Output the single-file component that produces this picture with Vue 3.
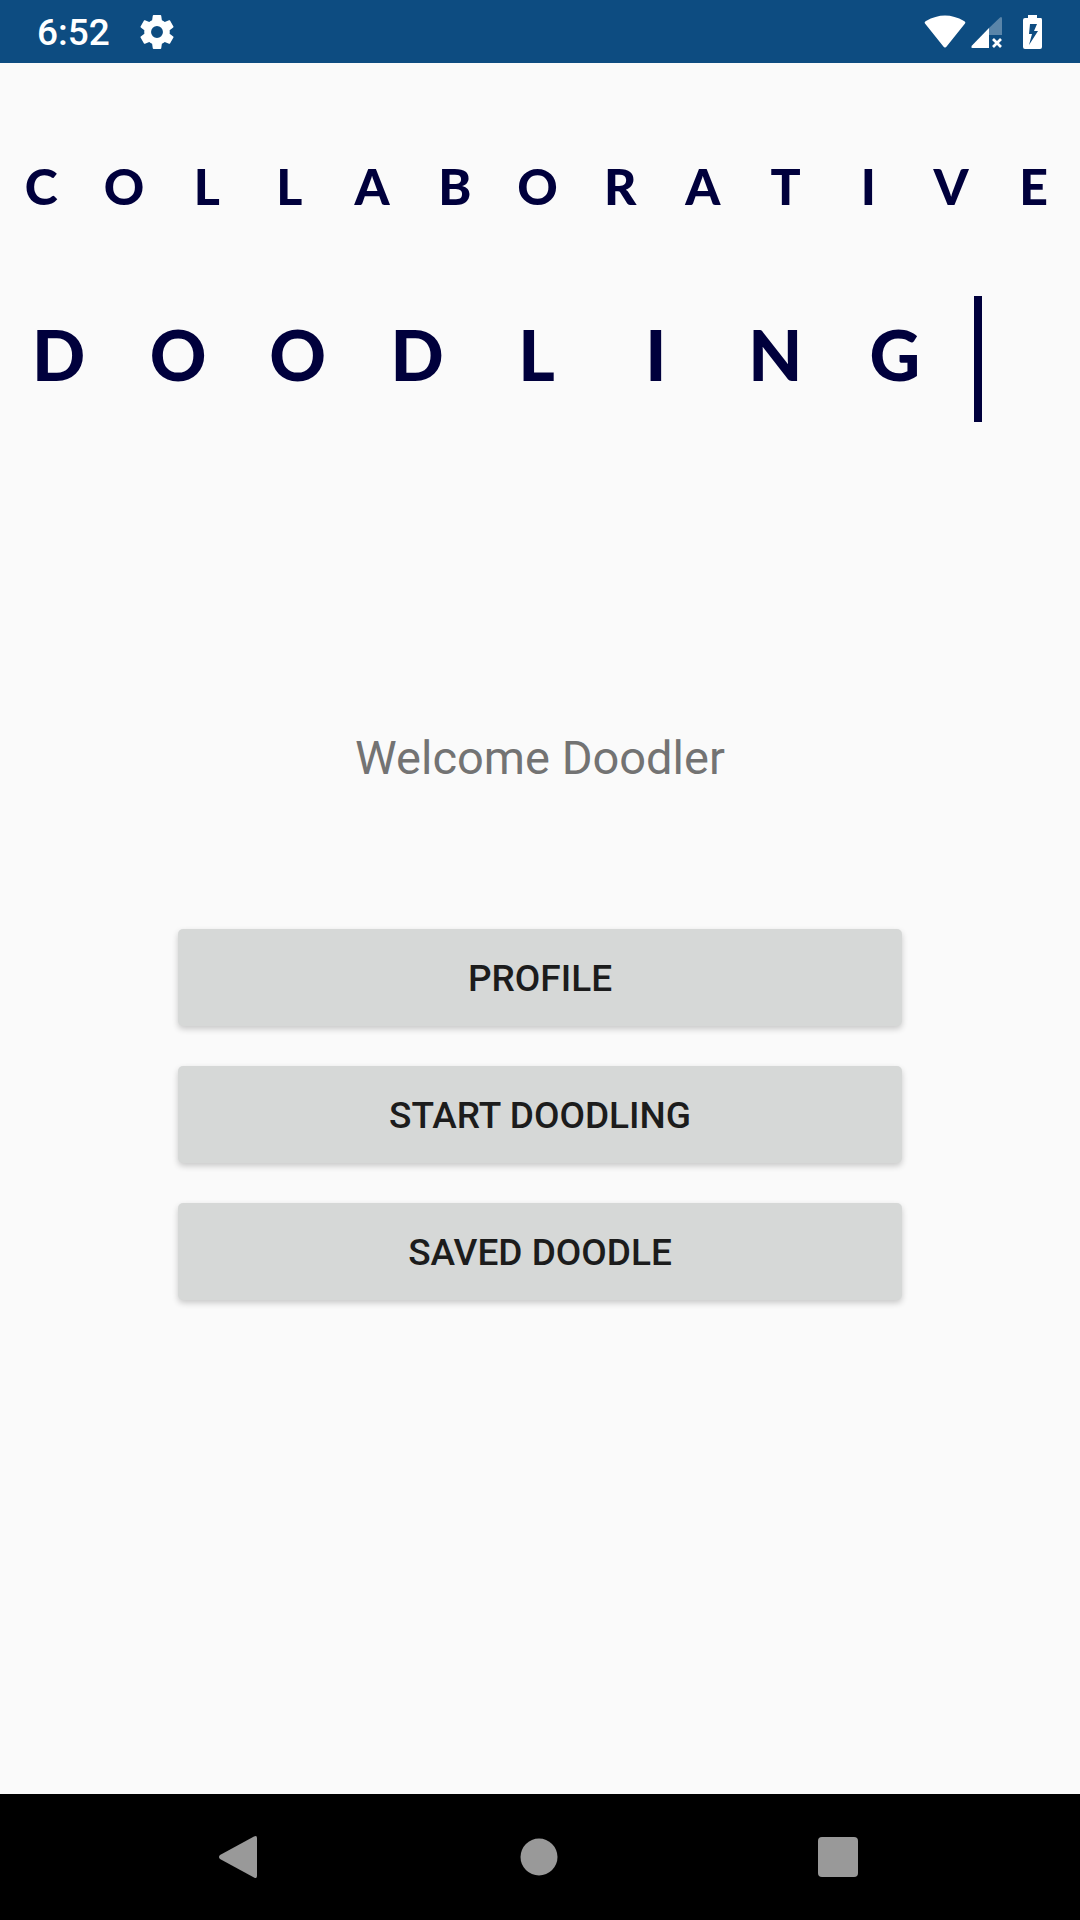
<script setup>
const topWord = [...'COLLABORATIVE']
const bottomWord = [...'DOODLING']
const actions = ['Profile', 'Start doodling', 'Saved doodle']
</script>

<template>
  <div class="screen">
    <header class="status">
      <time class="clock">6:52</time>
      <svg class="gear" viewBox="2 2 20 20" aria-hidden="true">
        <path fill="#fff" d="M19.43 12.98c.04-.32.07-.64.07-.98s-.03-.66-.07-.98l2.110-1.650c.19-.15.24-.42.12-.64l-2-3.460c-.12-.22-.39-.3-.61-.22l-2.490 1c-.52-.4-1.080-.73-1.690-.98l-.38-2.650A.49.49 0 0 0 14 2h-4c-.25 0-.46.18-.49.42l-.38 2.650c-.61.25-1.170.59-1.690.98l-2.490-1c-.23-.09-.49 0-.61.22l-2 3.460c-.13.22-.07.49.12.64l2.110 1.650c-.04.32-.07.65-.07.98s.03.66.07.98l-2.110 1.650c-.19.15-.24.42-.12.64l2 3.460c.12.22.39.3.61.22l2.490-1c.52.4 1.080.73 1.690.98l.38 2.650c.03.24.24.42.49.42h4c.25 0 .46-.18.49-.42l.38-2.650c.61-.25 1.170-.59 1.690-.98l2.490 1c.23.09.49 0 .61-.22l2-3.460c.12-.22.07-.49-.12-.64l-2.110-1.650zM12 15.500a3.500 3.500 0 1 1 0-7 3.500 3.500 0 0 1 0 7z" />
      </svg>
      <div class="signals">
        <svg width="42" height="34" viewBox="0 0 42 34" aria-hidden="true">
          <path fill="#fff" d="M1 8.500Q0 7 2 6Q21-5 40 6Q42 7 41 8.500L23 31Q21 34 19 31Z" />
        </svg>
        <svg class="cell" width="32" height="34" viewBox="0 0 32 34" aria-hidden="true">
          <path fill="#fff" d="M18 13V33H1.500Q-.5 33 1 30.500Z" />
          <path fill="#fff" fill-opacity=".32" d="M18 13L29 2.500Q31 1 31 4V20H18Z" />
          <path stroke="#fff" stroke-width="2.700" d="M22 24l8 8M30 24l-8 8" />
        </svg>
        <svg width="20" height="34" viewBox="0 0 20 34" aria-hidden="true">
          <path fill="#fff" fill-rule="evenodd" d="M5 0H14V3H18Q19 3 19 5V32Q19 34 17 34H2Q0 34 0 32V5Q0 3 2 3H5ZM7 9L6 19H9L6 30L15 16H11L14 9Z" />
        </svg>
      </div>
    </header>

    <main class="content">
      <h1 class="logo" aria-label="Collaborative Doodling">
        <span class="word small" aria-hidden="true">
          <span v-for="(letter, i) in topWord" :key="i">{{ letter }}</span>
        </span>
        <span class="word large" aria-hidden="true">
          <span v-for="(letter, i) in bottomWord" :key="i" class="letter">{{ letter }}</span>
          <span class="caret-cell"><i class="caret"></i></span>
        </span>
      </h1>
      <p class="welcome">Welcome Doodler</p>
      <div class="actions">
        <button v-for="action in actions" :key="action" type="button">{{ action }}</button>
      </div>
    </main>

    <nav class="navbar" aria-label="System navigation">
      <button type="button" aria-label="Back">
        <svg width="44" height="44" viewBox="0 0 44 44"><path fill="#999" d="M3 20L37 1.500Q40 0 40 3V41Q40 44 37 42.500L3 24Q1 22 3 20Z" /></svg>
      </button>
      <button type="button" aria-label="Home">
        <svg width="44" height="44" viewBox="0 0 44 44"><circle cx="22" cy="22" r="18.500" fill="#999" /></svg>
      </button>
      <button type="button" aria-label="Recent apps">
        <svg width="44" height="44" viewBox="0 0 44 44"><rect x="1" y="2" width="40" height="40" rx="4" fill="#999" /></svg>
      </button>
    </nav>
  </div>
</template>

<style>
body {
  margin: 0;
  background: #fafafa;
}
</style>

<style scoped>
.screen {
  display: flex;
  flex-direction: column;
  min-height: 100vh;
  background: #fafafa;
  font-family: Roboto, sans-serif;
}

.status {
  display: flex;
  align-items: center;
  box-sizing: border-box;
  height: 63px;
  padding: 0 37px;
  background: #0d4c81;
  color: #fff;
}

.clock {
  padding-top: 2px;
  font-size: 37px;
  font-weight: 500;
  line-height: 44px;
}

.gear {
  width: 34px;
  height: 34px;
  margin-left: 30px;
}

.signals {
  display: flex;
  align-items: center;
  margin-left: auto;
}

.cell {
  margin: 0 20px 0 5px;
}

.content {
  flex: 1;
}

.logo {
  margin: 0;
  padding-top: 93px;
  color: #00003c;
  font-family: Lato, sans-serif;
  font-weight: 900;
}

.word {
  display: grid;
  grid-auto-columns: 1fr;
  grid-auto-flow: column;
  align-items: center;
  padding-right: 5px;
  text-align: center;
}

.small {
  font-size: 50px;
  line-height: 60px;
}

.large {
  margin-top: 80px;
  font-size: 70px;
  line-height: 84px;
}

.letter {
  padding: 0 2px 10px 0;
}

.caret-cell {
  display: flex;
  padding-left: 18px;
}

.caret {
  width: 8px;
  height: 126px;
  background: #00003c;
}

.welcome {
  margin: 308px 0 0;
  color: #737373;
  font-size: 47px;
  line-height: 56px;
  text-align: center;
}

.actions {
  display: flex;
  flex-direction: column;
  gap: 40px;
  margin: 143px 178px 0;
}

.actions button {
  height: 97px;
  padding: 2px 0 0;
  border: 0;
  border-radius: 5px;
  background: #d6d8d7;
  box-shadow: 0 3px 6px rgba(0, 0, 0, 0.2);
  color: #1c1c1c;
  font: 500 37px/44px Roboto, sans-serif;
  text-transform: uppercase;
}

.navbar {
  display: flex;
  height: 126px;
  padding: 0 91px 0 89px;
  background: #000;
}

.navbar button {
  display: flex;
  flex: 1;
  align-items: center;
  justify-content: center;
  padding: 0;
  border: 0;
  background: none;
}
</style>
